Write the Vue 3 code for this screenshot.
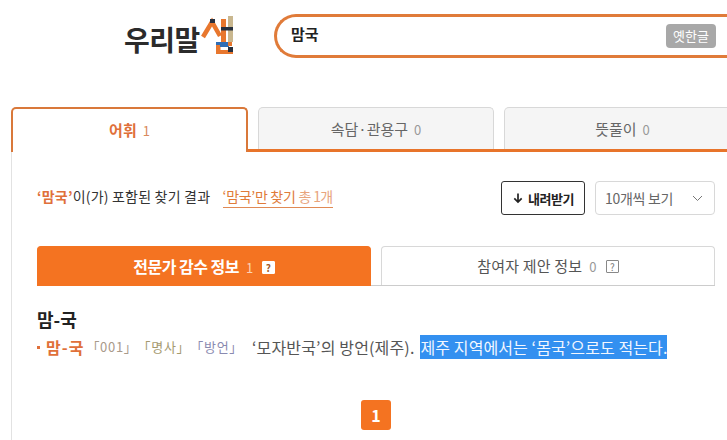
<template>
  <div class="page">
    <header class="top">
      <div class="logo">
        <span class="logo-text">우리말</span>
        <svg class="logo-mark" width="36" height="40" viewBox="0 0 36 40" aria-hidden="true">
          <rect x="27" y="0" width="5" height="26" fill="#c9b78f" />
          <rect x="20" y="3" width="5" height="23" fill="#e8772e" />
          <path d="M2 21 L11 6 L19 20" fill="none" stroke="#e8772e" stroke-width="4.5" />
          <rect x="9" y="3" width="5" height="4" fill="#27303f" />
          <rect x="20" y="11" width="12" height="3.5" fill="#27303f" />
          <rect x="15" y="26" width="4.5" height="12" fill="#e8772e" />
          <rect x="15" y="26" width="14" height="3" fill="#2f6db5" />
          <rect x="19" y="28" width="9" height="3" fill="#2f6db5" />
          <rect x="15" y="34" width="17" height="4" fill="#e8772e" />
          <rect x="27" y="26" width="4" height="4" fill="#e8772e" />
          <rect x="27" y="31" width="5" height="5" fill="#27303f" />
        </svg>
      </div>
      <div class="search">
        <span class="query">맘국</span>
        <span class="old-hangul">옛한글</span>
      </div>
    </header>

    <nav class="tabs">
      <div class="tab active">어휘<span class="count">1</span></div>
      <div class="tab">속담·관용구<span class="count">0</span></div>
      <div class="tab">뜻풀이<span class="count">0</span></div>
    </nav>

    <main class="panel">
      <div class="tools">
        <p class="summary">
          <b>‘맘국’</b>이(가) 포함된 찾기 결과
          <span class="only"><span>‘맘국’만 찾기</span> <i>총 1개</i></span>
        </p>
        <div class="actions">
          <button class="download">
            <svg width="12" height="12" viewBox="0 0 12 12" aria-hidden="true">
              <path d="M6 1.5V10M2.3 6.4 6 10l3.7-3.6" fill="none" stroke="#222" stroke-width="1.7" />
            </svg>
            내려받기
          </button>
          <div class="select">
            <span>10개씩 보기</span>
            <svg width="11" height="7" viewBox="0 0 11 7" aria-hidden="true">
              <path d="M1 1l4.5 4.5L10 1" fill="none" stroke="#777" stroke-width="1" />
            </svg>
          </div>
        </div>
      </div>

      <div class="subtabs">
        <div class="subtab on">전문가 감수 정보<span class="n">1</span><span class="q">?</span></div>
        <div class="subtab">참여자 제안 정보<span class="n">0</span><span class="q">?</span></div>
      </div>

      <article class="entry">
        <h2>맘-국</h2>
        <p class="def">
          <span class="dot"></span><b class="word">맘-국</b>
          <span class="m1">「001」</span><span class="m2">「명사」</span><span class="m3">「방언」</span>
          <span class="body">‘모자반국’의 방언(제주).</span>
          <span class="sel">제주 지역에서는 ‘몸국’으로도 적는다.</span>
        </p>
      </article>

      <div class="pager"><span>1</span></div>
    </main>
  </div>
</template>

<script setup>
</script>

<style>
html, body { margin: 0; overflow: hidden; }
</style>

<style scoped>
.page {
  width: 727px;
  height: 440px;
  overflow: hidden;
  background: #fff;
  font-family: "Noto Sans CJK KR", "Noto Sans", sans-serif;
  color: #444;
  font-size: 14px;
}
.top {
  display: flex;
  align-items: center;
  padding: 14px 0 0 124px;
  height: 44px;
}
.logo {
  display: flex;
  align-items: center;
  width: 150px;
  flex: none;
}
.logo-text {
  font-size: 28px;
  font-weight: 700;
  color: #2b2b2b;
  letter-spacing: -0.5px;
  line-height: 34px;
  margin-top: 6px;
}
.logo-mark { margin: 0 0 0 1px; }
.search {
  flex: none;
  box-sizing: border-box;
  width: 470px;
  height: 44px;
  border: 3px solid #e07b39;
  border-right: 0;
  border-radius: 22px 0 0 22px;
  display: flex;
  align-items: center;
  padding-left: 14px;
  position: relative;
}
.logo + .search { margin-left: 0; }
.query { font-size: 15px; font-weight: 700; color: #222; line-height: 34px; margin-top: -4px; }
.old-hangul {
  position: absolute;
  left: 389px;
  top: 7px;
  width: 50px;
  height: 24px;
  border-radius: 4px;
  background: #a8a8a8;
  color: #fff;
  font-size: 13px;
  line-height: 24px;
  text-align: center;
}
.tabs {
  display: flex;
  gap: 10px;
  margin: 49px 0 0 11px;
  width: 740px;
  box-sizing: border-box;
  border-bottom: 3px solid #e8742a;
  height: 45px;
}
.tab {
  flex: none;
  box-sizing: border-box;
  width: 237px;
  height: 42px;
  border: 1px solid #d8d8d8;
  border-bottom: 0;
  border-radius: 5px 5px 0 0;
  background: #f5f5f5;
  color: #666;
  text-align: center;
  line-height: 41px;
  font-size: 15px;
}
.tab:nth-child(2) { width: 236px; }
.tab .count { margin-left: 6px; color: #999; font-size: 13px; }
.tab.active {
  height: 45px;
  border: 2px solid #d9783a;
  border-bottom: 0;
  background: #fff;
  color: #e0703a;
  font-weight: 700;
  line-height: 41px;
}
.tab.active .count { font-weight: 400; color: #d98a5c; }
.panel {
  margin-left: 11px;
  border-left: 1px solid #e2e2e2;
  height: 288px;
  margin-top: -3px;
  padding: 3px 0 0 25px;
}
.tools {
  display: flex;
  justify-content: space-between;
  align-items: center;
  width: 678px;
  margin-top: 28px;
  height: 36px;
}
.summary {
  margin: 0 0 5px;
  font-size: 14px;
  letter-spacing: 0.2px;
  color: #333;
}
.summary b { color: #e0703a; }
.only { margin-left: 9px; border-bottom: 1px solid #e08a55; color: #e07b39; padding-bottom: 1px; letter-spacing: -0.3px; }
.only i { font-style: normal; color: #e8a47c; letter-spacing: -0.6px; }
.actions { display: flex; gap: 10px; margin-right: 0; }
.download {
  display: flex;
  align-items: center;
  justify-content: center;
  gap: 4px;
  box-sizing: border-box;
  width: 84px;
  height: 34px;
  padding: 0;
  background: #fff;
  border: 1px solid #333;
  border-radius: 3px;
  font: 700 13px "Noto Sans CJK KR", sans-serif;
  color: #222;
  letter-spacing: -0.5px;
}
.select {
  display: flex;
  align-items: center;
  justify-content: space-between;
  box-sizing: border-box;
  width: 120px;
  height: 34px;
  padding: 0 11px 0 9px;
  border: 1px solid #d8d8d8;
  border-radius: 4px;
  font-size: 14px;
  letter-spacing: -0.3px;
  color: #666;
}
.subtabs {
  display: flex;
  gap: 10px;
  margin-top: 28px;
  width: 678px;
  border-bottom: 1px solid #ccc;
  height: 39px;
  padding-top: 2px;
}
.subtab {
  flex: 1;
  box-sizing: border-box;
  height: 39px;
  border: 1px solid #d8d8d8;
  border-bottom: 0;
  border-radius: 4px 4px 0 0;
  text-align: center;
  line-height: 38px;
  color: #555;
  font-size: 15px;
  letter-spacing: 0.2px;
}
.subtab.on {
  background: #f47321;
  border-color: #f47321;
  color: #fff;
  font-weight: 700;
  font-size: 16px;
  height: 40px;
  letter-spacing: -0.5px;
}
.n { margin-left: 7px; font-size: 13px; font-weight: 400; color: #999; }
.on .n { color: #fbd2b5; }
.q {
  display: inline-block;
  box-sizing: border-box;
  width: 13px;
  height: 13px;
  margin-left: 9px;
  border: 1px solid #888;
  border-radius: 1px;
  font-size: 10px;
  line-height: 11px;
  font-weight: 400;
  color: #777;
  vertical-align: 1px;
  letter-spacing: 0;
}
.on .q { background: #fff; border-color: #fff; color: #a35a2a; font-weight: 700; }
.entry { margin-top: 20px; }
h2 {
  margin: 0;
  font-size: 18px;
  font-weight: 700;
  color: #222;
  line-height: 26px;
}
.def {
  margin: 3px 0 0;
  font-size: 16px;
  letter-spacing: 0.1px;
  line-height: 24px;
  white-space: nowrap;
  color: #555;
  display: flex;
  align-items: center;
}
.dot { width: 3px; height: 3px; background: #e0703a; margin-right: 6px; }
.word { color: #e0703a; margin-right: 2px; letter-spacing: 1px; }
.m1, .m2, .m3 { font-size: 13px; letter-spacing: 0.7px; }
.m1 { color: #a89a8a; }
.m2 { color: #a59a70; }
.m3 { color: #8a8ab0; }
.body { margin: 0 6px 0 9px; letter-spacing: 0.15px; }
.sel { background: #3390f0; color: #f2f7ff; padding-right: 0; margin-left: 0; }
.pager { width: 678px; margin-top: 41px; display: flex; justify-content: center; }
.pager span {
  width: 30px;
  height: 30px;
  border-radius: 3px;
  background: #f47321;
  color: #fff;
  font-weight: 700;
  font-size: 16px;
  line-height: 30px;
  text-align: center;
}
</style>
